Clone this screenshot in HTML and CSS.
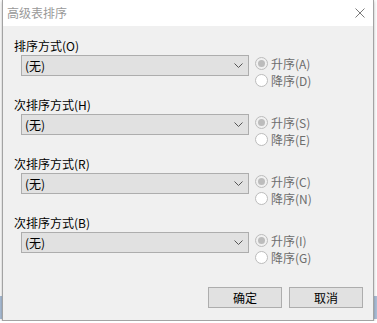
FILE: index.html
```html
<!DOCTYPE html>
<html lang="zh-CN">
<head>
    <meta charset="UTF-8">
    <meta name="viewport" content="width=device-width, initial-scale=1.0">
    <title>高级表排序</title>
    <link rel="stylesheet" href="styles.css">
</head>
<body>
    <div class="dialog">
        <div class="titlebar">
            <span class="title">高级表排序</span>
            <svg class="close" width="10" height="10" viewBox="0 0 10 10">
                <path d="M0.5 0.5 L9.5 9.5 M9.5 0.5 L0.5 9.5" stroke="#7a7a7a" stroke-width="1" fill="none"/>
            </svg>
        </div>

        <div class="content">
            <div class="section">
                <div class="label">排序方式(O)</div>
                <div class="row">
                    <div class="combo">
                        <span>(无)</span>
                        <svg class="arrow" width="9" height="5" viewBox="0 0 9 5"><path d="M0.5 0.5 L4.5 4.5 L8.5 0.5" stroke="#555" fill="none"/></svg>
                    </div>
                    <div class="radios">
                        <div class="radio"><span class="dot checked"></span>升序(A)</div>
                        <div class="radio"><span class="dot"></span>降序(D)</div>
                    </div>
                </div>
            </div>

            <div class="section">
                <div class="label">次排序方式(H)</div>
                <div class="row">
                    <div class="combo">
                        <span>(无)</span>
                        <svg class="arrow" width="9" height="5" viewBox="0 0 9 5"><path d="M0.5 0.5 L4.5 4.5 L8.5 0.5" stroke="#555" fill="none"/></svg>
                    </div>
                    <div class="radios">
                        <div class="radio"><span class="dot checked"></span>升序(S)</div>
                        <div class="radio"><span class="dot"></span>降序(E)</div>
                    </div>
                </div>
            </div>

            <div class="section">
                <div class="label">次排序方式(R)</div>
                <div class="row">
                    <div class="combo">
                        <span>(无)</span>
                        <svg class="arrow" width="9" height="5" viewBox="0 0 9 5"><path d="M0.5 0.5 L4.5 4.5 L8.5 0.5" stroke="#555" fill="none"/></svg>
                    </div>
                    <div class="radios">
                        <div class="radio"><span class="dot checked"></span>升序(C)</div>
                        <div class="radio"><span class="dot"></span>降序(N)</div>
                    </div>
                </div>
            </div>

            <div class="section">
                <div class="label">次排序方式(B)</div>
                <div class="row">
                    <div class="combo">
                        <span>(无)</span>
                        <svg class="arrow" width="9" height="5" viewBox="0 0 9 5"><path d="M0.5 0.5 L4.5 4.5 L8.5 0.5" stroke="#555" fill="none"/></svg>
                    </div>
                    <div class="radios">
                        <div class="radio"><span class="dot checked"></span>升序(I)</div>
                        <div class="radio"><span class="dot"></span>降序(G)</div>
                    </div>
                </div>
            </div>

            <div class="buttons">
                <div class="btn">确定</div>
                <div class="btn">取消</div>
            </div>
        </div>
    </div>
</body>
</html>
```

FILE: styles.css
```css
body {
    margin: 0;
    font-family: "Noto Sans CJK SC", "Noto Sans", sans-serif;
    font-size: 12px;
    color: #000;
    /* blue strip behind the window */
    background: linear-gradient(to bottom, #fff 296px, #abbfd8 296px, #abbfd8 319px, #fff 319px);
}
.dialog {
    margin-left: 2px;
    width: 372px;
    box-sizing: border-box;
    border: 1px solid #a3a3a3;
    border-top: 0;
    background-color: #f0f0f0;
    box-shadow: 0 1px 3px rgba(0, 0, 0, 0.3);
}
.titlebar {
    height: 26px;
    background-color: #fff;
    display: flex;
    align-items: center;
    padding: 0 8px 0 4px;
}
.title {
    flex: 1;
    color: #999;
    line-height: 16px;
}
.close {
    display: block;
}
.content {
    padding: 12px 10px 12px 11px;
}
.section {
    margin-bottom: 8px;
}
.label {
    line-height: 16px;
    height: 16px;
    margin-bottom: 1px;
}
.row {
    display: flex;
    align-items: flex-start;
    padding-left: 7px;
}
.combo {
    width: 228px;
    height: 21px;
    box-sizing: border-box;
    border: 1px solid #adadad;
    background-color: #e1e1e1;
    display: flex;
    align-items: center;
    justify-content: space-between;
    padding: 0 5px 0 3px;
    line-height: 19px;
}
.arrow {
    display: block;
}
.radios {
    margin-left: 6px;
}
.radio {
    height: 17px;
    line-height: 17px;
    display: flex;
    align-items: center;
    color: #6d6d6d;
}
.dot {
    width: 13px;
    height: 13px;
    box-sizing: border-box;
    border: 1px solid #bcbcbc;
    border-radius: 50%;
    background-color: #fff;
    margin-right: 3px;
    display: flex;
    align-items: center;
    justify-content: center;
}
.dot.checked {
    background-color: #f0f0f0;
}
.dot.checked::after {
    content: "";
    width: 7px;
    height: 7px;
    border-radius: 50%;
    background-color: #bcbcbc;
}
.buttons {
    display: flex;
    justify-content: flex-end;
    gap: 7px;
    margin-top: 21px;
}
.btn {
    width: 74px;
    height: 21px;
    box-sizing: border-box;
    border: 1px solid #adadad;
    background-color: #e1e1e1;
    text-align: center;
    line-height: 19px;
}
```
